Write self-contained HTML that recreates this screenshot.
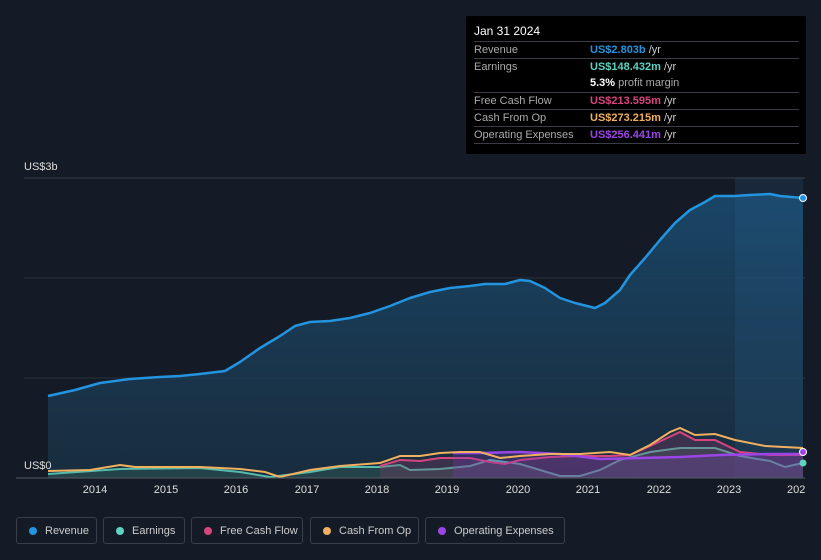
<!DOCTYPE html><html><head><style>
body{margin:0;width:821px;height:560px;background:#151b26;font-family:"Liberation Sans",sans-serif;overflow:hidden;position:relative}
.tt{position:absolute;left:466px;top:16px;width:340px;height:138px;background:#000;border-radius:2px}
.tt .h{position:absolute;left:8px;top:8px;color:#fff;font-size:12px}
.r{position:absolute;left:8px;width:325px;border-top:1px solid #3a3d44;height:17px;font-size:11px;color:#aaa;line-height:17px}
.r span{position:absolute;left:116px;font-weight:bold}
.r i{font-style:normal;color:#ccc;font-weight:normal}
.lg{position:absolute;top:517px;height:27px;border:1px solid #3a3f4a;border-radius:3px;font-size:11px;color:#ccc;line-height:27px;box-sizing:border-box;padding-left:28px}
.lg b{position:absolute;left:12px;top:9px;width:8px;height:8px;border-radius:50%}
.ax{position:absolute;top:484px;font-size:11px;color:#ddd;transform:translateX(-50%)}
</style></head><body>
<svg width="821" height="560" style="position:absolute;left:0;top:0">
<defs><linearGradient id="g" x1="0" y1="0" x2="0" y2="1"><stop offset="0" stop-color="#1a4a6e" stop-opacity=".9"/><stop offset="1" stop-color="#1a3448" stop-opacity=".7"/></linearGradient></defs>
<line x1="24" y1="178" x2="805" y2="178" stroke="#3a404c"/>
<line x1="24" y1="278" x2="805" y2="278" stroke="#2a303b"/>
<line x1="24" y1="378" x2="805" y2="378" stroke="#2a303b"/>
<path d="M48,396 L75,390 100,383 130,379 160,377 180,376 200,374 225,371 240,362 260,348 280,336 295,326 310,322 330,321 350,318 370,313 390,306 410,298 430,292 450,288 470,286 485,284 505,284 520,280 530,281 545,288 560,298 575,303 595,308 605,303 620,290 630,275 645,258 660,240 675,223 690,210 705,202 715,196 735,196 750,195 770,194 780,196 803,198 L803,478 48,478Z" fill="url(#g)"/>
<rect x="735" y="178" width="68" height="300" fill="#2a6a9a" opacity=".18"/>
<path d="M48,396 L75,390 100,383 130,379 160,377 180,376 200,374 225,371 240,362 260,348 280,336 295,326 310,322 330,321 350,318 370,313 390,306 410,298 430,292 450,288 470,286 485,284 505,284 520,280 530,281 545,288 560,298 575,303 595,308 605,303 620,290 630,275 645,258 660,240 675,223 690,210 705,202 715,196 735,196 750,195 770,194 780,196 803,198" fill="none" stroke="#2394df" stroke-width="2.5" stroke-linejoin="round"/>
<path d="M48,474 L120,469 200,468 240,472 270,477 310,472 340,467 380,467 400,465 410,470 440,469 470,466 490,460 520,464 540,470 560,476 580,476 600,470 620,460 650,452 680,448 715,448 740,456 770,461 785,467 803,463 L803,478 48,478Z" fill="#3a6a60" opacity=".35"/>
<path d="M48,474 L120,469 200,468 240,472 270,477 310,472 340,467 380,467 400,465 410,470 440,469 470,466 490,460 520,464 540,470 560,476 580,476 600,470 620,460 650,452 680,448 715,448 740,456 770,461 785,467 803,463" fill="none" stroke="#5fd3c0" stroke-width="2" opacity=".85"/>
<path d="M380,466 L400,460 420,461 440,458 470,458 490,462 505,464 520,460 550,457 580,456 610,456 630,455 650,446 680,432 695,440 715,440 740,452 770,455 803,455 L803,478 380,478Z" fill="#8a3a6a" opacity=".3"/>
<path d="M380,466 L400,460 420,461 440,458 470,458 490,462 505,464 520,460 550,457 580,456 610,456 630,455 650,446 680,432 695,440 715,440 740,452 770,455 803,455" fill="none" stroke="#d6457e" stroke-width="2"/>
<path d="M453,453 L480,453 520,452 560,454 600,459 640,458 680,457 720,455 770,454 803,454 L803,478 453,478Z" fill="#7a3ac0" opacity=".25"/>
<path d="M453,453 L480,453 520,452 560,454 600,459 640,458 680,457 720,455 770,454 803,454" fill="none" stroke="#9b45e6" stroke-width="2.5"/>
<path d="M48,471 L90,470 120,465 135,467 200,467 240,469 265,472 280,477 310,470 340,466 380,463 400,456 420,456 440,453 460,452 480,452 500,458 520,456 550,454 580,454 610,452 630,455 650,445 670,432 680,428 695,435 715,434 735,440 765,446 803,448" fill="none" stroke="#f0b060" stroke-width="2"/>
<line x1="16" y1="478" x2="805" y2="478" stroke="#555b66"/>
<circle cx="803" cy="198" r="3.5" fill="#2394df" stroke="#fff" stroke-width="1"/>
<circle cx="803" cy="452" r="3.5" fill="#9b45e6" stroke="#fff" stroke-width="1"/>
<circle cx="803" cy="463" r="3.5" fill="#5fd3c0"/>
</svg>
<div style="position:absolute;left:24px;top:161px;font-size:11px;color:#ddd">US$3b</div>
<div style="position:absolute;left:24px;top:460px;font-size:11px;color:#ddd">US$0</div>
<div class="ax" style="left:95px">2014</div><div class="ax" style="left:166px">2015</div><div class="ax" style="left:236px">2016</div><div class="ax" style="left:307px">2017</div><div class="ax" style="left:377px">2018</div><div class="ax" style="left:447px">2019</div><div class="ax" style="left:518px">2020</div><div class="ax" style="left:588px">2021</div><div class="ax" style="left:659px">2022</div><div class="ax" style="left:729px">2023</div><div class="ax" style="left:787px;transform:none">202</div>
<div class="tt"><div class="h">Jan 31 2024</div>
<div class="r" style="top:25px">Revenue<span style="color:#2394df">US$2.803b <i>/yr</i></span></div>
<div class="r" style="top:42px">Earnings<span style="color:#5fd3c0">US$148.432m <i>/yr</i></span></div>
<div class="r" style="top:59px;border:none"><span style="color:#fff">5.3% <i style="color:#aaa">profit margin</i></span></div>
<div class="r" style="top:76px">Free Cash Flow<span style="color:#d6457e">US$213.595m <i>/yr</i></span></div>
<div class="r" style="top:93px">Cash From Op<span style="color:#f0b060">US$273.215m <i>/yr</i></span></div>
<div class="r" style="top:110px">Operating Expenses<span style="color:#9b45e6">US$256.441m <i>/yr</i></span></div>
<div class="r" style="top:127px;height:0"></div>
</div>
<div class="lg" style="left:16px;width:81px"><b style="background:#2394df"></b>Revenue</div>
<div class="lg" style="left:103px;width:82px"><b style="background:#5fd3c0"></b>Earnings</div>
<div class="lg" style="left:191px;width:112px"><b style="background:#d6457e"></b>Free Cash Flow</div>
<div class="lg" style="left:310px;width:109px"><b style="background:#f0b060"></b>Cash From Op</div>
<div class="lg" style="left:425px;width:140px"><b style="background:#9b45e6"></b>Operating Expenses</div>
</body></html>
